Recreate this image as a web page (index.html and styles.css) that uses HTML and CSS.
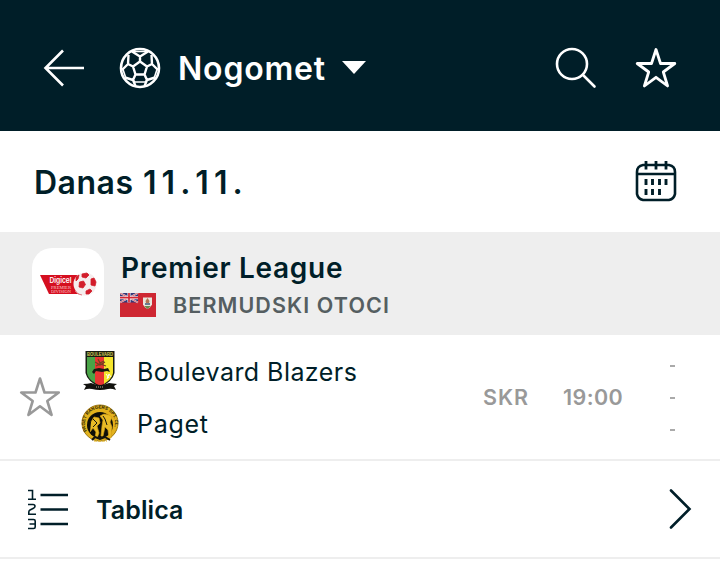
FILE: index.html
```html
<!DOCTYPE html>
<html lang="hr">
<head>
<meta charset="utf-8">
<title>Nogomet</title>
<link rel="stylesheet" href="styles.css">
</head>
<body>
<header class="topbar">
  <svg class="back" width="42" height="40" viewBox="0 0 42 40" fill="none" stroke="#fff" stroke-width="2.6"><path d="M20 2.500 2.500 20 20 37.500M2.500 20H41"/></svg>
  <svg class="ball" width="42" height="42" viewBox="0 0 42 42" fill="none" stroke="#fff" stroke-width="2.400" stroke-linejoin="round">
    <circle cx="21" cy="21" r="19" stroke-width="2.600"/>
    <path d="M21 14.500 28 19.500 25.500 27.500H16.500L14 19.500ZM21 14.500V9.500L13 4.500M21 9.500l8-5M28 19.500l5-2.500-.5-9M33 17l6 6M14 19.500 9 17l.5-9M9 17l-6 6M25.500 27.500 28 33l8-2.500M28 33 25.500 39M16.500 27.500 14 33l-8-2.500M14 33l2.500 6"/>
    <path d="M14 4.500h14M3.500 21l3 9M38.500 21l-3 9M14 33l2 2h10l2-2" stroke-width="1.600"/>
  </svg>
  <h1 class="sport">Nogomet</h1>
  <svg class="caret" width="24" height="13" viewBox="0 0 24 13"><path d="M0 0h24L12 13Z" fill="#fff"/></svg>
  <svg class="search" width="42" height="42" viewBox="0 0 42 42" fill="none" stroke="#fff" stroke-width="2.600" stroke-linecap="round"><circle cx="17" cy="17" r="15"/><path d="m28 28 11.500 11.500"/></svg>
  <svg class="star" width="42" height="42" viewBox="0 0 42 42" fill="none" stroke="#fff" stroke-width="2.800" stroke-linejoin="round"><path d="m21 2.500 4.500 14h14.300L28.300 25l4.300 14L21 30.300 9.400 39l4.300-14L2.200 16.500h14.300Z"/></svg>
</header>
<section class="date">
  <h2 class="day">Danas <span class="digits">11.11.</span></h2>
  <svg class="calendar" width="42" height="42" viewBox="0 0 42 42" fill="none" stroke="#001e28" stroke-width="2.600">
    <path d="M8 5h26q6 1 6 7v22q-1 5-6 6H8q-5-1-6-6V12q0-6 6-7ZM2 14h38"/>
    <path d="M11 1v8.500M21 1v8.500M31 1v8.500" stroke-width="2.800"/>
    <path d="M11 19v6M17.500 19v6M24.500 19v6M31 19v6M11 29v6M17.500 29v6M24.500 29v6" stroke-width="2.900"/>
  </svg>
</section>
<section class="league">
  <div class="badge">
    <svg width="72" height="72" viewBox="0 0 72 72">
      <path d="M8 27h40v19H17Z" fill="#d50f20"/>
      <text x="17.500" y="34.500" class="logo-name" textLength="22" lengthAdjust="spacingAndGlyphs">Digicel</text>
      <text x="19" y="40.500" class="logo-sub" textLength="20" lengthAdjust="spacingAndGlyphs">PREMIER</text>
      <text x="19" y="45" class="logo-sub" textLength="20" lengthAdjust="spacingAndGlyphs">DIVISION</text>
      <circle cx="53" cy="36" r="11.500" fill="#f5eded"/>
      <path d="m47.500 34 4-1 2 3.500-2.500 3.500-4-1ZM50 26l5-1 2 2-3 3-4-1ZM59 31l3-1 2 4-1 4-4-1ZM54 43l4-2 2 2-3 3h-3ZM44 29l3-2-1 4-2 2Z" fill="#d31d2b" stroke="#d31d2b" stroke-width=".8"/>
      <path d="M43 43q3 4 7 4" fill="none" stroke="#df7880"/>
    </svg>
  </div>
  <div class="league-text">
    <h3 class="league-name">Premier League</h3>
    <div class="country">
      <svg class="flag" width="36" height="24" viewBox="0 0 36 24">
        <path d="M0 0h36v24H0Z" fill="#ce2732"/><path d="M0 0h18v9.500H0Z" fill="#343778"/>
        <path d="m0 0 18 9.500M18 0 0 9.500" stroke="#eee" stroke-width="1.800"/><path d="m0 0 18 9.500M18 0 0 9.500" stroke="#d32a38" stroke-width=".7"/>
        <path d="M9 0v9.500M0 4.700h18" stroke="#fff" stroke-width="3"/><path d="M9 0v9.500M0 4.700h18" stroke="#d32632" stroke-width="1.700"/>
        <path d="M23 4.500h9v7q-1 3-4.500 4.500Q24 14.500 23 11.500Z" fill="#e9e5dc"/><path d="M24 13h7l-3.500 3Z" fill="#6b8a4c"/><path d="m27.500 5 2 3-1 4h-2l-1-4Z" fill="#b17552"/><path d="M25 10h5v2h-5Z" fill="#697b91"/>
      </svg>
      <span>BERMUDSKI OTOCI</span>
    </div>
  </div>
</section>
<section class="match">
  <svg class="fav" width="42" height="42" viewBox="0 0 42 42" fill="none" stroke="#999" stroke-width="2.600" stroke-linejoin="round"><path d="m21 2.500 4.500 14h14.300L28.300 25l4.300 14L21 30.300 9.400 39l4.300-14L2.200 16.500h14.300Z"/></svg>
  <div class="teams">
    <div class="team">
      <svg class="crest" width="38" height="42" viewBox="0 0 38 42">
        <path d="M4.500 1h29v22q-2 9-14.500 14Q6.500 32 4.500 23Z" fill="#171b11"/>
        <path d="M6 7h8v26q-7-4-8-10Z" fill="#49a447"/><path d="M14 7h9v27l-4 2-5-3Z" fill="#e83532"/><path d="M23 7h9v16q-1 6-9 11Z" fill="#f5e52c"/>
        <text x="6" y="5.800" class="crest-name" textLength="26" lengthAdjust="spacingAndGlyphs">BOULEVARD</text>
        <path d="m11 22 2-3 5-1 5 1 4-1 2 4-3-1-5 1-6-1-2 3Z" fill="#171b11"/><path d="m14 12 5 3 5-3M17 9l2 4 4-2M15 16l4-2 6 2" fill="none" stroke="#6f451e" stroke-width="1.200"/>
        <path d="m25 24 3 4M26 29l2-5 2 3" stroke="#fff" fill="none"/>
        <path d="M2 34q5 0 8-1 9 4 18 0l8 1-3 2 2 4q-5-2-8-1-8 2-16 0-4-1-8 1l2-4Z" fill="#12120f"/><path d="M15 37h8" stroke="#b5b19a" stroke-dasharray="1 1"/>
      </svg>
      <span>Boulevard Blazers</span>
    </div>
    <div class="team">
      <svg class="crest" width="38" height="40" viewBox="0 0 38 40">
        <circle cx="19" cy="20" r="18" fill="#e3b21d" stroke="#9c7814"/><circle cx="19" cy="22" r="13" fill="#0e0e08"/>
        <defs><path id="ring" d="M6 28A15 15 0 1 1 32 28"/></defs>
        <text class="ring-name"><textPath href="#ring" textLength="58">PAGET RANGERS SPT. CL.</textPath></text>
        <path d="m10 19 3-5 5 1 1 5-3 3 2 7-2 5h-2l1-6-3-4-3 4M28 12l3 2-2 5 2 5-1 11h-2l-1-8-3-3-2 9h-2l1-10 1-6-3-4 4-2Z" fill="#e9bb27" stroke="#d59e13" stroke-width=".7"/>
        <path d="m12 16 4 4-4 4M24 16l2 6M22 13l2 3" stroke="#19170b" stroke-width="1" fill="none"/>
        <path d="m11 37 3-3 5 2 5-2 5 3" stroke="#14130e" stroke-width="2" fill="none"/><path d="M13 38h13" stroke="#e3b21d" stroke-dasharray="3 1"/>
      </svg>
      <span class="short">Paget</span>
    </div>
  </div>
  <span class="round">SKR</span>
  <span class="time">19:00</span>
  <div class="scores"><i></i><i></i><i></i></div>
</section>
<section class="table-link">
  <svg width="42" height="42" viewBox="0 0 42 42" fill="none" stroke="#001e28" stroke-width="2.500">
    <path d="M12.500 7H40M12.500 21.500H40M12.500 36H40"/>
    <path d="M0 2.500h4.500V11M0 11.300h8M0 16.500h5q2 0 2 1.700 0 1.300-1.500 2L2 22Q.8 22.700 .8 24v2.300M0 26.300h8M0 31.500h5.500q1.700 0 1.700 1.500v6q0 1.500-1.700 1.500H0M1.500 36h5.500" stroke-width="1.600"/>
  </svg>
  <span class="table-label">Tablica</span>
  <svg class="chevron" width="24" height="42" viewBox="0 0 24 42" fill="none" stroke="#001e28" stroke-width="2.600" stroke-linecap="round"><path d="M3 2.500 21.500 21 3 39.500"/></svg>
</section>
</body>
</html>
```
FILE: styles.css
```css
* { box-sizing: border-box; }
body { margin: 0; background: #fff; color: #001e28; font-family: Inter, "Liberation Sans", sans-serif; }
h1, h2, h3 { margin: 0; font-weight: 600; }
svg { display: block; flex: none; }
span, h1, h2, h3 { white-space: nowrap; }

.topbar { height: 131px; padding: 4px 43px 0; display: flex; align-items: center; background: #001e28; color: #fff; }
.ball { margin-left: 34px; }
.sport { width: 165px; margin-left: 17px; padding-top: 2px; font-size: 32px; line-height: 40px; letter-spacing: 0.8px; }
.caret { margin-left: -1px; }
.search { margin-left: auto; }
.star { margin-left: 38px; }

.date { height: 101px; padding: 0 43px 0 34px; display: flex; align-items: center; justify-content: space-between; }
.day { padding-top: 2px; font-size: 32px; line-height: 40px; letter-spacing: 0.5px; }
.digits { margin-left: 1px; font-kerning: none; letter-spacing: 5px; }
.calendar { margin-bottom: 2px; }

.league { height: 103px; padding: 0 32px; display: flex; align-items: center; gap: 16px; background: #eee; }
.badge { width: 72px; height: 72px; border-radius: 20px; background: #fff; overflow: hidden; }
.logo-name { font: 600 7.5px Inter, sans-serif; fill: #fff; }
.logo-sub { font: 5px "Liberation Serif", serif; fill: #ffc9c9; }
.league-text { padding-top: 4px; }
.league-name { padding-left: 1px; font-size: 28px; line-height: 36px; letter-spacing: 0.7px; }
.country { display: flex; align-items: center; gap: 17px; padding-top: 2px; font-size: 21.5px; line-height: 34px; font-weight: 600; letter-spacing: 1.1px; color: #555e61; }

.match { height: 126px; border-bottom: 2px solid #eee; display: flex; align-items: center; padding-left: 19px; color: #999; }
.teams { width: 402px; margin-left: 20px; display: grid; gap: 10px; color: #001e28; }
.team { height: 42px; padding-top: 2px; display: flex; align-items: center; gap: 18px; font-size: 25px; line-height: 32px; letter-spacing: 0.45px; }
.short { letter-spacing: 0.7px; }
.crest { margin-top: -2px; }
.crest-name { font: bold 4.5px "Liberation Sans", sans-serif; letter-spacing: 0; fill: #d7cb58; }
.ring-name { font: bold 4.5px "Liberation Sans", sans-serif; letter-spacing: 0; fill: #282105; }
.round, .time { font-size: 21.5px; font-weight: 600; line-height: 28px; }
.round { width: 80px; letter-spacing: 1px; }
.time { width: 107px; letter-spacing: 0.4px; }
.scores { display: grid; gap: 30px; padding-top: 1px; }
.scores i { width: 5px; height: 2px; background: #aaa; }

.table-link { height: 98px; border-bottom: 2px solid #eee; display: flex; align-items: center; padding: 0 28px; }
.table-label { margin-left: 26px; padding-top: 2px; font-size: 25px; line-height: 32px; font-weight: 600; letter-spacing: 0.1px; }
.chevron { margin-left: auto; }
```
